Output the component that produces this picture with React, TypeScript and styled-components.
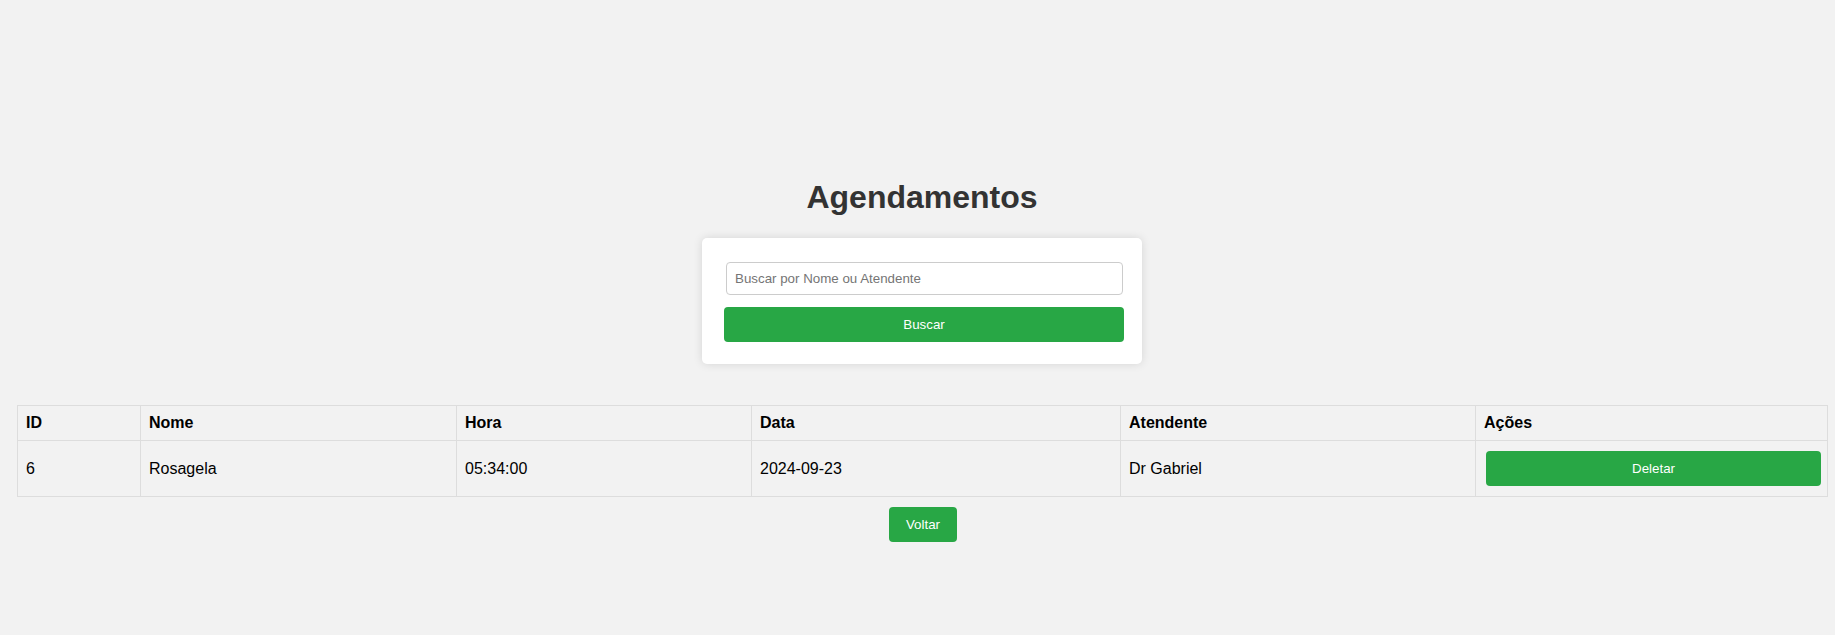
import React, { useState } from 'react';
import styled, { createGlobalStyle } from 'styled-components';

const GlobalStyle = createGlobalStyle`
  html, body {
    margin: 0;
    padding: 0;
    background: #f2f2f2;
    font-family: Arial, "Liberation Sans", sans-serif;
  }
`;

interface Agendamento {
  id: number;
  nome: string;
  hora: string;
  data: string;
  atendente: string;
}

const agendamentos: Agendamento[] = [
  { id: 6, nome: 'Rosagela', hora: '05:34:00', data: '2024-09-23', atendente: 'Dr Gabriel' },
];

const columnWidths = [123, 316, 295, 369, 355, 352];

export default function App() {
  const [busca, setBusca] = useState('');

  return (
    <Page>
      <GlobalStyle />
      <Title>Agendamentos</Title>
      <SearchCard>
        <SearchInput placeholder="Buscar por Nome ou Atendente" value={busca} onChange={(e) => setBusca(e.target.value)} />
        <GreenButton $block>Buscar</GreenButton>
      </SearchCard>
      <TableWrap>
        <Table>
          <colgroup>
            {columnWidths.map((w, i) => (
              <col key={i} style={{ width: w }} />
            ))}
          </colgroup>
          <thead>
            <tr>
              <Th>ID</Th>
              <Th>Nome</Th>
              <Th>Hora</Th>
              <Th>Data</Th>
              <Th>Atendente</Th>
              <Th>Ações</Th>
            </tr>
          </thead>
          <tbody>
            {agendamentos.map((a) => (
              <tr key={a.id}>
                <Td>{a.id}</Td>
                <Td>{a.nome}</Td>
                <Td>{a.hora}</Td>
                <Td>{a.data}</Td>
                <Td>{a.atendente}</Td>
                <Td>
                  <GreenButton $block>Deletar</GreenButton>
                </Td>
              </tr>
            ))}
          </tbody>
        </Table>
        <Footer>
          <GreenButton>Voltar</GreenButton>
        </Footer>
      </TableWrap>
    </Page>
  );
}

const Page = styled.div`
  display: flex;
  flex-direction: column;
  align-items: center;
  padding: 158px 8px 0 17px;
`;

const Title = styled.h1`
  font-size: 32px;
  font-weight: bold;
  color: #333;
  margin: 21px 0 22px;
`;

const SearchCard = styled.div`
  box-sizing: border-box;
  width: 440px;
  padding: 20px;
  background: #fff;
  border-radius: 5px;
  box-shadow: 0 0 10px rgba(0, 0, 0, 0.12);
  display: flex;
  flex-direction: column;
`;

const SearchInput = styled.input`
  box-sizing: border-box;
  width: 397px;
  height: 33px;
  margin: 4px 0 10px 4px;
  padding: 0 8px;
  border: 1px solid #ccc;
  border-radius: 4px;
  font-family: Arial, "Liberation Sans", sans-serif;
  font-size: 13.333px;
  color: #333;
  &::placeholder {
    color: #757575;
  }
`;

const GreenButton = styled.button<{ $block?: boolean }>`
  box-sizing: border-box;
  width: ${({ $block }) => ($block ? '100%' : '68px')};
  height: 35px;
  margin: 2px;
  margin-left: ${({ $block }) => ($block ? '2px' : '4px')};
  flex-shrink: 0;
  border: none;
  border-radius: 4px;
  background: #28a745;
  color: #fff;
  font-family: Arial, "Liberation Sans", sans-serif;
  font-size: 13.333px;
  cursor: pointer;
`;

const TableWrap = styled.div`
  align-self: stretch;
  padding-top: 41px;
  display: flex;
  flex-direction: column;
`;

const Table = styled.table`
  width: 1810px;
  table-layout: fixed;
  border-collapse: collapse;
  color: #000;
  font-size: 16px;
`;

const Th = styled.th`
  border: 1px solid #ddd;
  padding: 8px;
  text-align: left;
  font-weight: bold;
`;

const Td = styled.td`
  border: 1px solid #ddd;
  padding: 8px;
  text-align: left;
  vertical-align: middle;
`;

const Footer = styled.div`
  display: flex;
  justify-content: center;
  padding-top: 8px;
`;
